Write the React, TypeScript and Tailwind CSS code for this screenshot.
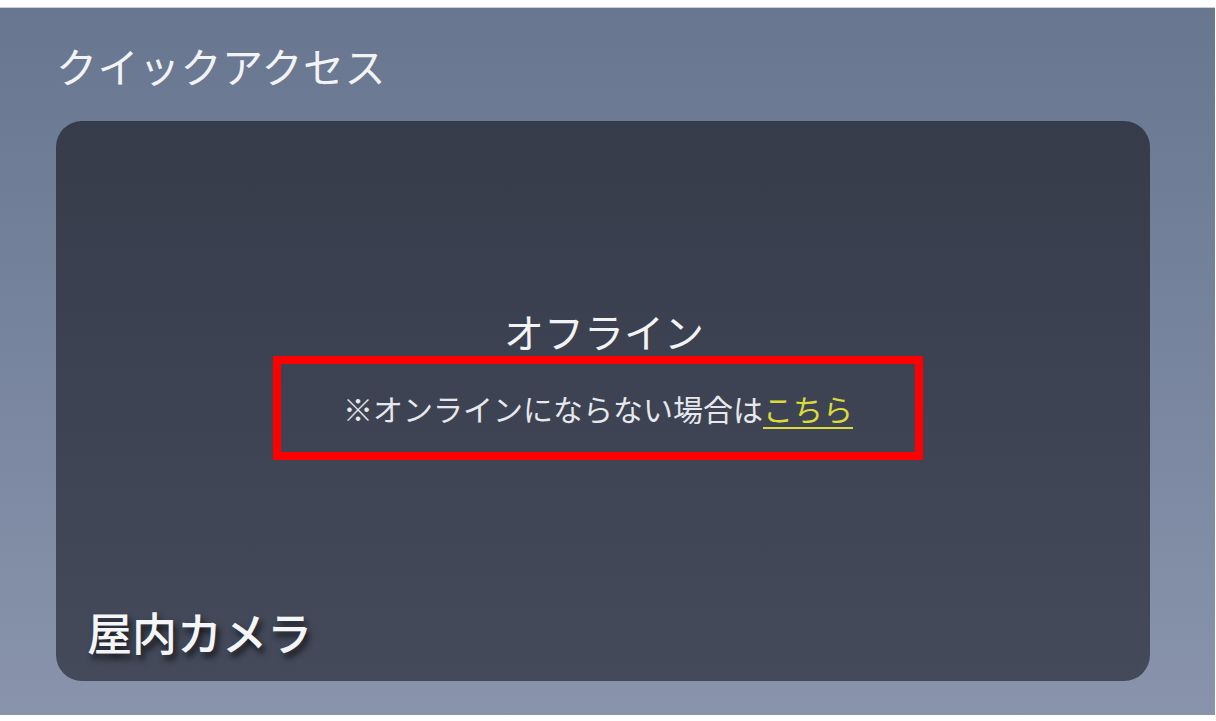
const App = () => {
  return (
    <div
      className="w-[1216px] h-[721px] bg-white pt-[7px] pb-[6px] pr-[1px]"
      style={{ fontFamily: '"Noto Sans CJK JP", "Noto Sans", sans-serif' }}
    >
      <div className="h-full border-t border-[#c9ccd4] bg-gradient-to-b from-[#687690] to-[#8994ac] pl-[56px] pr-[65px] pt-[30px] flex flex-col">
        <h2 className="text-[41px] leading-[54px] text-[#f2f3f5] tracking-[0.5px]">
          クイックアクセス
        </h2>
        <div className="mt-[29px] h-[560px] rounded-[26px] bg-gradient-to-b from-[#363c4a] to-[#444a5a] flex flex-col">
          <div className="flex-1 flex flex-col items-center pt-[184px]">
            <div className="text-[40px] leading-[52px] text-[#f2f3f5] pl-[2px]">オフライン</div>
            <div className="mt-[-1px] ml-[-10px] w-[650px] h-[104px] border-[8px] border-[#ff0000] flex items-center justify-center">
              <span className="text-[30px] leading-[38px] text-[#e6e8ec]">
                ※オンラインにならない場合は
                <a className="text-[#dcd93a] underline underline-offset-[6px] decoration-[2px]">こちら</a>
              </span>
            </div>
          </div>
          <div
            className="pl-[31px] pb-[22px] text-[45px] leading-[54px] font-medium text-[#f4f5f7]"
            style={{ textShadow: "3px 5px 6px rgba(0,0,0,0.7)" }}
          >
            屋内カメラ
          </div>
        </div>
      </div>
    </div>
  );
};

export default App;
